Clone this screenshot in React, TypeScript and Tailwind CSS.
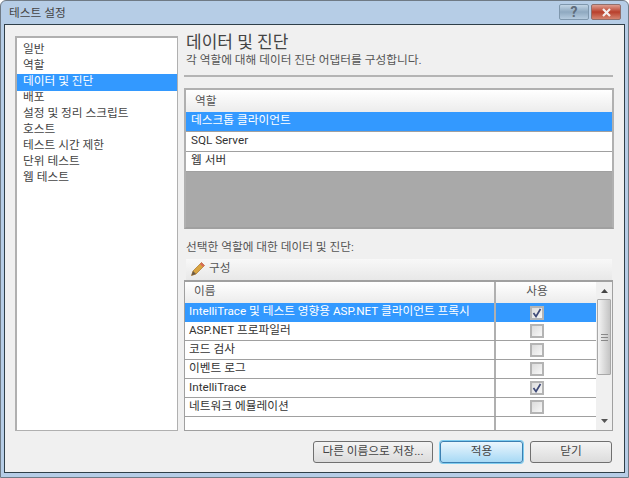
const FONT = 'font-["Roboto","Noto_Sans_CJK_KR",sans-serif]'

const navItems = ['일반', '역할', '데이터 및 진단', '배포', '설정 및 정리 스크립트', '호스트', '테스트 시간 제한', '단위 테스트', '웹 테스트']
const roles = ['데스크톱 클라이언트', 'SQL Server', '웹 서버']
const adapters = [
  { name: 'IntelliTrace 및 테스트 영향용 ASP.NET 클라이언트 프록시', on: true },
  { name: 'ASP.NET 프로파일러', on: false },
  { name: '코드 검사', on: false },
  { name: '이벤트 로그', on: false },
  { name: 'IntelliTrace', on: true },
  { name: '네트워크 에뮬레이션', on: false },
]

function Check({ on }: { on: boolean }) {
  return (
    <div className="w-[14px] h-[14px] border-2 border-[#b4b4b4] bg-gradient-to-br from-[#dcdcdc] to-[#f8f8f8] flex items-center justify-center">
      {on && (
        <svg width="10" height="10" viewBox="0 0 10 10" className="shrink-0">
          <path d="M1.5 5 L4 8.5 L8.5 1" fill="none" stroke="#3f4a78" strokeWidth="1.7" />
        </svg>
      )}
    </div>
  )
}

export default function App() {
  return (
    <div className={`${FONT} w-[629px] h-[478px] bg-[#b6cde6] border border-[#6f7a85] rounded-t-md flex flex-col overflow-hidden text-[11.7px] leading-none text-[#333]`}>
      <div className="h-[23px] shrink-0 flex items-start justify-between pl-2 pr-[7px]">
        <span className="text-[#444] mt-[7px]">테스트 설정</span>
        <div className="flex gap-[2px]">
          <div className="w-[30px] h-[16px] mt-[3px] rounded-[2px] border border-[#7f97ad] bg-gradient-to-b from-[#c3d5e6] via-[#8fa9c0] to-[#b5cbdf] flex items-center justify-center text-[14px] font-bold text-[#5f6c7a]">?</div>
          <div className="w-[30px] h-[16px] mt-[3px] rounded-[2px] border border-[#8f6f6c] bg-gradient-to-b from-[#dd9d90] via-[#b83f2c] to-[#d3836f] flex items-center justify-center">
            <svg width="11" height="9" viewBox="0 0 11 9">
              <path d="M2 1 L9 8 M9 1 L2 8" stroke="#f4eeee" strokeWidth="2.2" />
            </svg>
          </div>
        </div>
      </div>

      <div className="flex-1 mx-[3px] mb-[4px] border border-[#2f3f49] bg-[#f0f0f0] flex flex-col min-h-0">
        <div className="flex-1 flex gap-[6px] pl-[10px] pr-[8px] pt-[11px] min-h-0">
          <div className="w-[163px] h-[395px] shrink-0 bg-white border-2 border-[#b0b0b0] border-r border-b pt-[4px]">
            <ul>
              {navItems.map((item, i) => (
                <li key={item} className={`h-4 flex items-center pl-[6px] ${i === 2 ? 'bg-[#3399ff] text-white shadow-[0_1px_0_#3399ff]' : 'text-[#444]'}`}>
                  {item}
                </li>
              ))}
            </ul>
          </div>

          <div className="w-[430px] flex flex-col">
            <h1 className="text-[17px] leading-none font-normal text-[#444] -mt-[2px] ml-[2px]">데이터 및 진단</h1>
            <p className="text-[#555] mt-[4px] ml-[2px]">각 역할에 대해 데이터 진단 어댑터를 구성합니다.</p>
            <div className="h-[2px] bg-[#b4b4b4] mt-[8px] mr-[1px]" />

            <div className="h-[141px] mt-[11px] border-2 border-[#b0b0b0] border-b-[#a0a0a0] bg-[#a9a9a9] flex flex-col">
              <div className="h-[22px] bg-gradient-to-b from-white to-[#ececec] flex items-center pl-[9px] pt-[2px] text-[#555]">역할</div>
              {roles.map((r, i) => (
                <div key={r} className={`h-[20px] flex items-center pl-[5px] border-b border-[#a0a0a0] ${i === 0 ? 'bg-[#3399ff] text-white' : 'bg-white text-[#333]'}`}>
                  {r}
                </div>
              ))}
            </div>

            <p className="mt-[13px] ml-[2px] text-[#555]">선택한 역할에 대한 데이터 및 진단:</p>
            <div className="h-[21px] mt-[6px] mx-[2px] bg-gradient-to-b from-[#f8f8f8] to-[#e8e8e8] flex items-center pl-[4px] pb-px gap-[3px] text-[#555]">
              <svg width="16" height="16" viewBox="0 0 16 16">
                <path d="M1.5 14.5 L3 10 L11.5 1.5 L14.5 4.5 L6 13 Z" fill="#d9a441" stroke="#a9762a" strokeWidth="0.7" />
                <path d="M1.5 14.5 L3 10 L6 13 Z" fill="#6a5a48" />
                <path d="M11.5 1.5 L14.5 4.5 L13 6 L10 3 Z" fill="#d9695a" />
              </svg>
              <span>구성</span>
            </div>

            <div className="h-[151px] border border-[#a0a0a0] border-t-2 bg-white flex mr-[1px]">
              <div className="flex-1 flex flex-col min-w-0">
                <div className="h-[21px] shrink-0 flex bg-gradient-to-b from-white to-[#ececec] text-[#555]">
                  <div className="w-[311px] flex items-center pl-[9px] pb-px border-r-2 border-[#b0b0b0]">이름</div>
                  <div className="flex-1 flex items-center justify-center pb-px pr-[18px]">사용</div>
                </div>
                {adapters.map((a, i) => (
                  <div key={a.name} className={`h-[19px] shrink-0 flex border-b border-[#a0a0a0] ${i === 0 ? 'bg-[#3399ff] text-white h-[18px] border-b-0' : 'text-[#333]'}`}>
                    <div className="w-[311px] flex items-center pl-[4px] pb-px border-r-2 border-[#b0b0b0] whitespace-nowrap">{a.name}</div>
                    <div className="flex-1 flex items-center justify-center pr-[18px]"><Check on={a.on} /></div>
                  </div>
                ))}
                <div className="flex-1 flex">
                  <div className="w-[311px] border-r-2 border-[#b0b0b0]" />
                </div>
              </div>
              <div className="w-[16px] shrink-0 bg-[#f0f0f0] flex flex-col items-center">
                <div className="h-[17px] flex items-center">
                  <svg width="7" height="4" viewBox="0 0 7 4"><path d="M3.5 0 L7 4 L0 4 Z" fill="#444" /></svg>
                </div>
                <div className="w-[14px] h-[76px] border border-[#a8a8a8] rounded-[1px] bg-gradient-to-r from-[#f4f4f4] to-[#c4c4c4] flex items-center justify-center">
                  <div className="w-[7px] h-[7px] border-y border-[#888] flex items-center"><div className="w-full h-px bg-[#888]" /></div>
                </div>
                <div className="flex-1" />
                <div className="h-[17px] flex items-center">
                  <svg width="7" height="4" viewBox="0 0 7 4"><path d="M3.5 4 L7 0 L0 0 Z" fill="#555" /></svg>
                </div>
              </div>
            </div>
          </div>
        </div>

        <div className="h-[41px] shrink-0 flex justify-end items-start gap-[7px] pr-[12px] pt-[10px]">
          <button className="w-[120px] h-[22px] rounded-[3px] border border-[#707070] bg-gradient-to-b from-[#f4f4f4] to-[#dcdcdc] text-[#444]">다른 이름으로 저장...</button>
          <button className="w-[83px] h-[22px] rounded-[3px] border border-[#3c7fb1] shadow-[0_0_0_1px_#7ecdf0] bg-gradient-to-b from-[#eaf6fd] to-[#a7d9f5] text-[#444]">적용</button>
          <button className="w-[82px] h-[22px] rounded-[3px] border border-[#707070] bg-gradient-to-b from-[#f4f4f4] to-[#dcdcdc] text-[#444]">닫기</button>
        </div>
      </div>
    </div>
  )
}
